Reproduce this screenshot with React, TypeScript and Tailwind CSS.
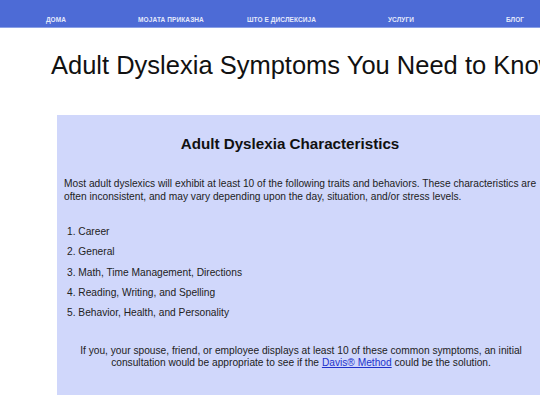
import React from 'react';

const navItems = [
  { label: 'ДОМА', width: 'w-[112px]' },
  { label: 'МОЈАТА ПРИКАЗНА', width: 'w-[118px]' },
  { label: 'ШТО Е ДИСЛЕКСИЈА', width: 'w-[103px]' },
  { label: 'УСЛУГИ', width: 'w-[136px]' },
  { label: 'БЛОГ', width: 'w-[92px]' },
];

const categories = [
  'Career',
  'General',
  'Math, Time Management, Directions',
  'Reading, Writing, and Spelling',
  'Behavior, Health, and Personality',
];

const App: React.FC = () => {
  return (
    <div className="min-h-screen bg-white text-[#111] font-['Liberation_Sans',Arial,sans-serif] overflow-hidden">
      {/* Top navigation */}
      <nav className="h-[28px] bg-[#4d6bd6] border-b border-[#8aa0e6] flex items-start pt-[16px] whitespace-nowrap">
        {navItems.map(item => (
          <a
            key={item.label}
            href="#"
            className={`${item.width} shrink-0 text-center text-[6.5px] leading-[8px] font-bold text-[#e4e9fb] tracking-[0.1px]`}
          >
            {item.label}
          </a>
        ))}
      </nav>

      {/* Page heading */}
      <h1 className="mt-[22px] ml-[51px] text-[25.5px] leading-[30px] whitespace-nowrap text-[#111]">
        Adult Dyslexia Symptoms You Need to Know
      </h1>

      {/* Characteristics box */}
      <section className="mt-[35px] ml-[57px] w-[500px] bg-[#d0d7fb] px-[7px] pt-[19px] pb-[26px]">
        <h2 className="text-center pr-[34px] text-[15.2px] leading-[20px] font-bold text-[#111]">
          Adult Dyslexia Characteristics
        </h2>

        <p className="mt-[24px] text-[10.2px] leading-[12.5px] text-[#222]">
          Most adult dyslexics will exhibit at least 10 of the following traits and behaviors. These characteristics are often inconsistent, and may vary depending upon the day, situation, and/or stress levels.
        </p>

        <ol className="mt-[23px] ml-[3px] flex flex-col gap-[8px] text-[10.2px] leading-[12.25px] text-[#222]">
          {categories.map((cat, i) => (
            <li key={cat}>
              {i + 1}. {cat}
            </li>
          ))}
        </ol>

        <p className="mt-[26px] pr-[12px] text-center text-[10.2px] leading-[12px] text-[#222]">
          If you, your spouse, friend, or employee displays at least 10 of these common symptoms, an initial consultation would be appropriate to see if the{' '}
          <a href="#" className="text-[#2233cc] underline">Davis® Method</a> could be the solution.
        </p>
      </section>
    </div>
  );
};

export default App;
